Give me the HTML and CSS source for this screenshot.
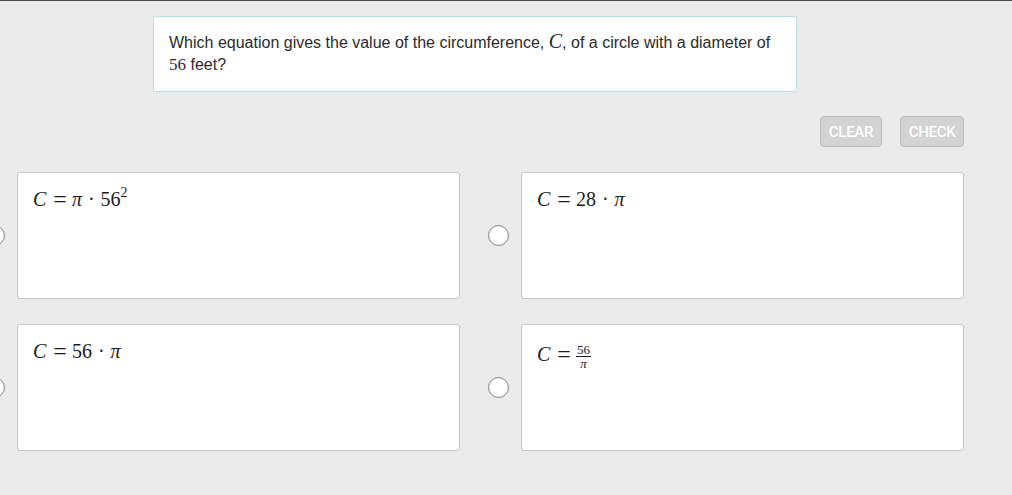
FILE: index.html
```html
<!DOCTYPE html>
<html>
<head>
<meta charset="utf-8">
<link rel="stylesheet" href="styles.css">
</head>
<body>
<div class="topline"></div>
<div class="page">
  <div class="question">
    Which equation gives the value of the circumference, <span class="mv">C</span>, of a circle with a diameter of <span class="mn">56</span> feet?
  </div>
  <div class="actions">
    <button class="btn btn-clear">CLEAR</button>
    <button class="btn btn-check">CHECK</button>
  </div>
  <div class="options">
    <div class="option">
      <span class="radio"></span>
      <div class="card"><span class="math"><i>C</i><span class="op">=</span><i>π</i><span class="dot">·</span>56<sup>2</sup></span></div>
    </div>
    <div class="option">
      <span class="radio"></span>
      <div class="card"><span class="math"><i>C</i><span class="op">=</span>28<span class="dot">·</span><i>π</i></span></div>
    </div>
    <div class="option">
      <span class="radio"></span>
      <div class="card"><span class="math"><i>C</i><span class="op">=</span>56<span class="dot">·</span><i>π</i></span></div>
    </div>
    <div class="option">
      <span class="radio"></span>
      <div class="card"><span class="math"><i>C</i><span class="op">=</span><span class="frac"><span class="num">56</span><span class="den"><i>π</i></span></span></span></div>
    </div>
  </div>
</div>
</body>
</html>
```

FILE: styles.css
```css
html, body {
  margin: 0;
  padding: 0;
}
body {
  background: #ebebeb;
  width: 1012px;
  height: 495px;
  overflow: hidden;
  font-family: "Liberation Sans", Arial, sans-serif;
  color: #333;
}
.topline {
  height: 1px;
  background: #4a4a4a;
}
.page {
  padding-top: 15px;
}
.question {
  margin-left: 153px;
  width: 612px;
  height: 46px;
  padding: 14px 15px 14px 15px;
  background: #fff;
  border: 1px solid #b5dfe2;
  border-radius: 2px;
  font-size: 16px;
  line-height: 22px;
  color: #2b2b2b;
}
.mv {
  font-family: "Liberation Serif", serif;
  font-style: italic;
  font-size: 20px;
  line-height: 1;
}
.mn {
  font-family: "Liberation Serif", serif;
  font-size: 17px;
  line-height: 1;
}
.actions {
  display: flex;
  justify-content: flex-end;
  gap: 18px;
  width: 964px;
  margin-top: 24px;
}
.btn {
  height: 31px;
  padding: 0;
  background: #d3d3d3;
  border: 1px solid #bdbdbd;
  border-radius: 4px;
  color: #fff;
  font-family: "Liberation Sans Narrow", "Roboto", sans-serif;
  font-size: 15px;
  font-weight: 500;
  letter-spacing: -0.3px;
}
.btn-clear {
  width: 62px;
}
.btn-check {
  width: 64px;
}
.options {
  display: grid;
  grid-template-columns: 476px 476px;
  column-gap: 28px;
  row-gap: 25px;
  margin-left: -16px;
  margin-top: 25px;
}
.option {
  display: flex;
  align-items: center;
  gap: 12px;
}
.radio {
  flex: none;
  width: 19px;
  height: 19px;
  border: 1px solid #8a8a8a;
  border-radius: 50%;
  background: #fff;
  box-shadow: inset 0 0 1px #aaa;
}
.card {
  width: 412px;
  height: 112px;
  padding: 13px 15px 0 15px;
  background: #fff;
  border: 1px solid #c6c6c6;
  border-radius: 3px;
}
.math {
  font-family: "Liberation Serif", serif;
  font-size: 20px;
  line-height: 26px;
  color: #1b1b24;
  display: inline-flex;
  align-items: center;
}
.math i {
  font-style: italic;
}
.op {
  margin: 0 5px 0 7px;
  font-size: 24px;
}
.dot {
  margin: 0 6px;
}
.math sup {
  font-size: 14px;
  line-height: 1;
  position: relative;
  top: -6px;
}
.frac {
  display: inline-flex;
  flex-direction: column;
  align-items: center;
  font-size: 13px;
  line-height: 11px;
  margin-top: 6px;
}
.num {
  padding: 0 1px 1px;
  border-bottom: 1px solid #1b1b24;
}
.den {
  padding-top: 1px;
}
```
